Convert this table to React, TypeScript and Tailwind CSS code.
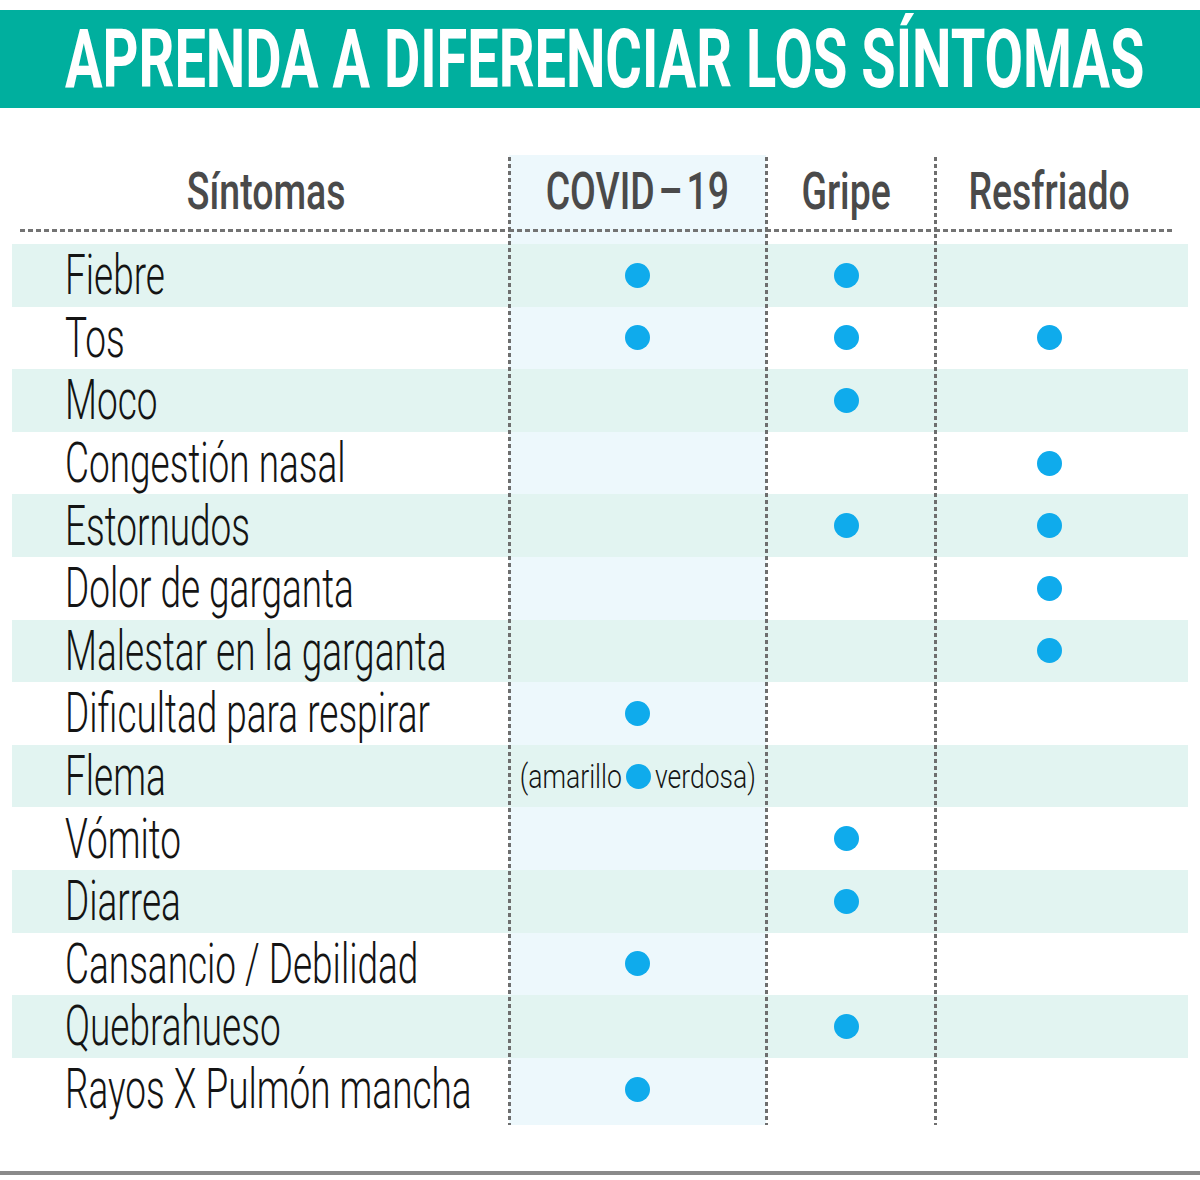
import React from 'react';

type Row = { label: string; covid?: boolean; gripe?: boolean; resfriado?: boolean; flema?: boolean };

const rows: Row[] = [
  { label: 'Fiebre', covid: true, gripe: true },
  { label: 'Tos', covid: true, gripe: true, resfriado: true },
  { label: 'Moco', gripe: true },
  { label: 'Congestión nasal', resfriado: true },
  { label: 'Estornudos', gripe: true, resfriado: true },
  { label: 'Dolor de garganta', resfriado: true },
  { label: 'Malestar en la garganta', resfriado: true },
  { label: 'Dificultad para respirar', covid: true },
  { label: 'Flema', flema: true },
  { label: 'Vómito', gripe: true },
  { label: 'Diarrea', gripe: true },
  { label: 'Cansancio / Debilidad', covid: true },
  { label: 'Quebrahueso', gripe: true },
  { label: 'Rayos X Pulmón mancha', covid: true },
];

const font = { fontFamily: 'Roboto, "Liberation Sans", sans-serif' };

const Dot = () => <span className="inline-block w-[25px] h-[25px] rounded-full bg-[#0fabec]" />;

const VLine = ({ left }: { left: string }) => (
  <div
    className={`absolute top-[2px] bottom-0 w-[3px] bg-[repeating-linear-gradient(to_bottom,#6e6e6e_0_4px,transparent_4px_7px)] ${left}`}
  />
);

const HDash = ({ className = '' }: { className?: string }) => (
  <div className={`h-[3px] bg-[repeating-linear-gradient(to_right,#737373_0_5px,transparent_5px_8px)] ${className}`} />
);

const HeaderText = ({ children }: { children: React.ReactNode }) => (
  <span className="inline-block whitespace-nowrap text-[52px] leading-none font-medium text-[#4a4a4a] scale-x-[0.72] origin-center">
    {children}
  </span>
);

export default function App() {
  return (
    <div className="w-[1200px] h-[1180px] bg-white overflow-hidden" style={font}>
      {/* banner */}
      <div className="mt-[10px] h-[98px] bg-[#00af9e] flex items-center pl-[65px]">
        <span className="inline-block whitespace-nowrap text-[81px] leading-none font-bold text-white scale-x-[0.69] origin-left">
          APRENDA A DIFERENCIAR LOS SÍNTOMAS
        </span>
      </div>

      {/* table */}
      <div className="relative mt-[47px] ml-[12px] w-[1176px]">
        <div className="grid grid-cols-[497px_257px_169px_253px]">
          <div className="flex flex-col">
            <div className="h-[74px] flex items-center justify-center pl-[12px]">
              <HeaderText>Síntomas</HeaderText>
            </div>
            <HDash className="ml-[8px]" />
            <div className="h-[12px]" />
          </div>
          <div className="flex flex-col bg-[#edf8fc]">
            <div className="h-[74px] flex items-center justify-center">
              <HeaderText>COVID{'\u200A'}–{'\u200A'}19</HeaderText>
            </div>
            <HDash />
            <div className="h-[12px]" />
          </div>
          <div className="flex flex-col">
            <div className="h-[74px] flex items-center justify-center pr-[8px]">
              <HeaderText>Gripe</HeaderText>
            </div>
            <HDash />
            <div className="h-[12px]" />
          </div>
          <div className="flex flex-col">
            <div className="h-[74px] flex items-center justify-center pr-[24px]">
              <HeaderText>Resfriado</HeaderText>
            </div>
            <HDash className="w-[237px]" />
            <div className="h-[12px]" />
          </div>
        </div>

        {rows.map((r, i) => {
          const striped = i % 2 === 0;
          return (
            <div
              key={r.label}
              className={`grid grid-cols-[497px_257px_169px_253px] h-[62.6px] ${striped ? 'bg-[#e2f4f1]' : ''}`}
            >
              <div className="flex items-center pl-[53px]">
                <span className="inline-block whitespace-nowrap text-[56px] leading-none font-light text-[#141414] scale-x-[0.66] origin-left">
                  {r.label}
                </span>
              </div>
              <div className={`flex items-center justify-center ${striped ? '' : 'bg-[#edf8fc]'}`}>
                {r.covid && <Dot />}
                {r.flema && (
                  <span className="inline-flex items-center whitespace-nowrap text-[34px] leading-none font-light text-[#141414]">
                    <span className="inline-block scale-x-[0.78] origin-right">(amarillo</span>
                    <span className="inline-block w-[25px] h-[25px] rounded-full bg-[#0fabec] mx-[4px]" />
                    <span className="inline-block scale-x-[0.78] origin-left">verdosa)</span>
                  </span>
                )}
              </div>
              <div className="flex items-center justify-center pr-[8px]">{r.gripe && <Dot />}</div>
              <div className="flex items-center justify-center pr-[24px]">{r.resfriado && <Dot />}</div>
            </div>
          );
        })}

        <div className="grid grid-cols-[497px_257px_169px_253px] h-[5px]">
          <div />
          <div className="bg-[#edf8fc]" />
        </div>

        <VLine left="left-[496px]" />
        <VLine left="left-[753px]" />
        <VLine left="left-[922px]" />
      </div>

      <div className="mt-[46px] h-[4px] bg-[#8a8a8a]" />
    </div>
  );
}
